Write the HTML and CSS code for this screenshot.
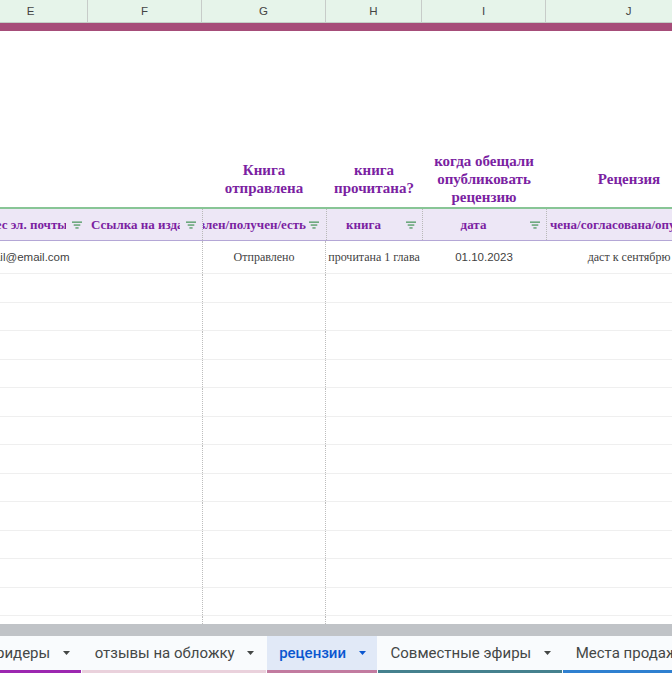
FILE: index.html
```html
<!DOCTYPE html>
<html lang="ru">
<head>
<meta charset="utf-8">
<link rel="stylesheet" href="styles.css">
</head>
<body>
<div class="app">
  <div class="colhead">
    <div class="ch">E</div>
    <div class="ch">F</div>
    <div class="ch">G</div>
    <div class="ch">H</div>
    <div class="ch">I</div>
    <div class="ch">J</div>
  </div>
  <div class="band"></div>
  <div class="sheet">
    <div class="grid">
      <div class="row blank"><div></div><div></div><div></div><div></div><div></div><div></div></div>
      <div class="row heads">
        <div></div>
        <div></div>
        <div class="h">Книга<br>отправлена</div>
        <div class="h">книга<br>прочитана?</div>
        <div class="h">когда обещали<br>опубликовать<br>рецензию</div>
        <div class="h">Рецензия</div>
      </div>
      <div class="row filters">
        <div class="fc"><div class="fl"><span>Адрес эл. почты</span></div><div class="fi"><svg width="10" height="8" viewBox="0 0 10 8"><rect x="0" y="0.5" width="10" height="1.3"/><rect x="1.7" y="3.4" width="6.6" height="1.3"/><rect x="3.4" y="6.3" width="3.2" height="1.3"/></svg></div></div>
        <div class="fc"><div class="fl start"><span>Ссылка на издание</span></div><div class="fi"><svg width="10" height="8" viewBox="0 0 10 8"><rect x="0" y="0.5" width="10" height="1.3"/><rect x="1.7" y="3.4" width="6.6" height="1.3"/><rect x="3.4" y="6.3" width="3.2" height="1.3"/></svg></div></div>
        <div class="fc dl"><div class="fl end"><span>Экземпляр отправлен/получен/есть</span></div><div class="fi narrow"><svg width="10" height="8" viewBox="0 0 10 8"><rect x="0" y="0.5" width="10" height="1.3"/><rect x="1.7" y="3.4" width="6.6" height="1.3"/><rect x="3.4" y="6.3" width="3.2" height="1.3"/></svg></div></div>
        <div class="fc dl"><div class="fl"><span>книга</span></div><div class="fi"><svg width="10" height="8" viewBox="0 0 10 8"><rect x="0" y="0.5" width="10" height="1.3"/><rect x="1.7" y="3.4" width="6.6" height="1.3"/><rect x="3.4" y="6.3" width="3.2" height="1.3"/></svg></div></div>
        <div class="fc dl"><div class="fl"><span>дата</span></div><div class="fi"><svg width="10" height="8" viewBox="0 0 10 8"><rect x="0" y="0.5" width="10" height="1.3"/><rect x="1.7" y="3.4" width="6.6" height="1.3"/><rect x="3.4" y="6.3" width="3.2" height="1.3"/></svg></div></div>
        <div class="fc dl"><div class="fl start"><span>чена/согласована/опубликована</span></div></div>
      </div>
      <div class="row data first">
        <div class="dc sans left">email@email.com</div>
        <div class="dc"></div>
        <div class="dc dg">Отправлено</div>
        <div class="dc">прочитана 1 глава</div>
        <div class="dc sans">01.10.2023</div>
        <div class="dc">даст к сентябрю</div>
      </div>
      <div class="row data"><div></div><div></div><div class="dg"></div><div></div><div></div><div></div></div>
      <div class="row data"><div></div><div></div><div class="dg"></div><div></div><div></div><div></div></div>
      <div class="row data"><div></div><div></div><div class="dg"></div><div></div><div></div><div></div></div>
      <div class="row data"><div></div><div></div><div class="dg"></div><div></div><div></div><div></div></div>
      <div class="row data"><div></div><div></div><div class="dg"></div><div></div><div></div><div></div></div>
      <div class="row data"><div></div><div></div><div class="dg"></div><div></div><div></div><div></div></div>
      <div class="row data"><div></div><div></div><div class="dg"></div><div></div><div></div><div></div></div>
      <div class="row data"><div></div><div></div><div class="dg"></div><div></div><div></div><div></div></div>
      <div class="row data"><div></div><div></div><div class="dg"></div><div></div><div></div><div></div></div>
      <div class="row data"><div></div><div></div><div class="dg"></div><div></div><div></div><div></div></div>
      <div class="row data"><div></div><div></div><div class="dg"></div><div></div><div></div><div></div></div>
      <div class="row data"><div></div><div></div><div class="dg"></div><div></div><div></div><div></div></div>
      <div class="row data"><div></div><div></div><div class="dg"></div><div></div><div></div><div></div></div>
    </div>
  </div>
  <div class="hscroll"></div>
  <div class="tabs">
    <div class="tab t1"><span>ридеры</span><svg class="tri" width="7" height="4" viewBox="0 0 7 4"><polygon points="0,0 7,0 3.5,4"/></svg></div>
    <div class="tab t2"><span>отзывы на обложку</span><svg class="tri" width="7" height="4" viewBox="0 0 7 4"><polygon points="0,0 7,0 3.5,4"/></svg></div>
    <div class="tab t3 sel"><span>рецензии</span><svg class="tri" width="7" height="4" viewBox="0 0 7 4"><polygon points="0,0 7,0 3.5,4"/></svg></div>
    <div class="tab t4"><span>Совместные эфиры</span><svg class="tri" width="7" height="4" viewBox="0 0 7 4"><polygon points="0,0 7,0 3.5,4"/></svg></div>
    <div class="tab t5"><span>Места продаж</span><svg class="tri" width="7" height="4" viewBox="0 0 7 4"><polygon points="0,0 7,0 3.5,4"/></svg></div>
  </div>
</div>
</body>
</html>
```
FILE: styles.css
```css
html, body {
  margin: 0;
  padding: 0;
  background: #fff;
}
body {
  width: 672px;
  height: 673px;
  overflow: hidden;
}
.app {
  width: 672px;
  height: 673px;
  overflow: hidden;
  display: flex;
  flex-direction: column;
  background: #fff;
}
.colhead {
  flex-shrink: 0;
  height: 23px;
  margin-left: -26px;
  display: grid;
  grid-template-columns: 114px 114px 124px 96px 124px 166px;
  background: #e6f4ea;
  border-bottom: 1px solid #c4cfc7;
  box-sizing: border-box;
}
.ch {
  display: flex;
  align-items: center;
  justify-content: center;
  border-right: 1px solid #c7ccc9;
  font: 11.5px "Liberation Sans", Arial, sans-serif;
  color: #444;
}
.band {
  flex-shrink: 0;
  height: 8px;
  background: #a64d79;
}
.sheet {
  flex-shrink: 0;
  height: 593px;
  overflow: hidden;
}
.grid {
  margin-left: -26px;
}
.row {
  display: grid;
  grid-template-columns: 114px 114px 124px 96px 124px 166px;
  box-sizing: border-box;
}
.blank {
  height: 119px;
}
.heads {
  height: 57px;
}
.h {
  display: flex;
  align-items: center;
  justify-content: center;
  text-align: center;
  font: bold 15px/18px "Liberation Serif", "Times New Roman", serif;
  color: #7b1fa2;
}
.filters {
  height: 34px;
  background: #ede7f6;
  border-top: 2px solid #88c596;
  border-bottom: 1px solid #b4a7d6;
}
.fc {
  display: flex;
  align-items: center;
  min-width: 0;
  overflow: hidden;
  box-sizing: border-box;
}
.fl {
  flex: 1;
  min-width: 0;
  overflow: hidden;
  display: flex;
  justify-content: center;
  white-space: nowrap;
  font: bold 13px "Liberation Serif", "Times New Roman", serif;
  color: #7b1fa2;
}
.fl span {
  flex-shrink: 0;
}
.fl.end {
  justify-content: flex-end;
}
.fl.start {
  justify-content: flex-start;
  padding-left: 3px;
}
.fi {
  flex-shrink: 0;
  width: 22px;
  display: flex;
  align-items: center;
  justify-content: center;
  fill: #4f9a61;
}
.fi.narrow {
  width: 20px;
  justify-content: flex-start;
  padding-left: 3px;
  box-sizing: border-box;
}
.dl {
  border-left: 1px dotted #b9b9b9;
}
.data {
  height: 28.5px;
  border-bottom: 1px solid #efefef;
}
.data.first {
  height: 33px;
}
.dg {
  border-left: 1px dotted #bdbdbd;
  border-right: 1px dotted #bdbdbd;
}
.dc {
  display: flex;
  align-items: center;
  justify-content: center;
  overflow: hidden;
  white-space: nowrap;
  font: 12px "Liberation Serif", "Times New Roman", serif;
  color: #3f3f3f;
}
.dc.sans {
  font: 11.5px "Liberation Sans", Arial, sans-serif;
}
.dc.left {
  justify-content: flex-start;
  padding-left: 4px;
}
.hscroll {
  flex-shrink: 0;
  height: 12px;
  background: #c0c3c7;
}
.tabs {
  flex-shrink: 0;
  height: 37px;
  margin-left: -16.5px;
  display: flex;
  gap: 1px;
  background: #f9fbfd;
}
.tab {
  flex-shrink: 0;
  height: 37px;
  box-sizing: border-box;
  display: flex;
  align-items: center;
  gap: 12.5px;
  padding: 0 11.5px 0 12.5px;
  border-bottom: 3px solid transparent;
  font: 15px Roboto, "Noto Sans", sans-serif;
  color: #444746;
  white-space: nowrap;
}
.tri {
  fill: currentColor;
}
.tab.sel {
  background: #e1e9f7;
  color: #0b57d0;
  font-weight: 500;
}
.t1 { border-bottom-color: #9c27b0; }
.t2 { border-bottom-color: #ead1dc; }
.t3 { border-bottom-color: #c27ba0; }
.t4 { border-bottom-color: #45818e; }
.t5 { border-bottom-color: #2f80d0; }
```
